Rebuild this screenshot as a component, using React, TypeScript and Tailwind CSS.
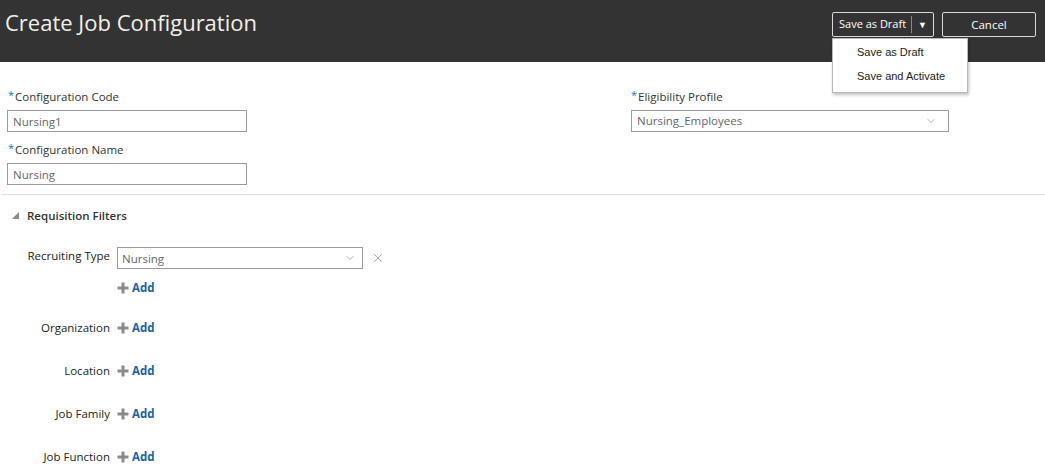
import { ChevronDown, X } from "lucide-react";

const font = { fontFamily: '"Open Sans", "Noto Sans", sans-serif' };

function Req({ children }: { children: string }) {
  return (
    <div className="flex h-[16px] items-end text-[11.5px] leading-[16px] text-[#333]">
      <span className="mr-[1px] self-start text-[11px] leading-[11px] text-[#1a73b8]">*</span>
      {children}
    </div>
  );
}

function AddLink() {
  return (
    <button className="flex items-center gap-[3px] text-[11.5px] font-bold text-[#1c639f]">
      <svg width="12" height="12" viewBox="0 0 12 12">
        <rect x="4.5" y="0.5" width="3" height="11" fill="#8a8a8a" />
        <rect x="0.5" y="4.5" width="11" height="3" fill="#8a8a8a" />
      </svg>
      Add
    </button>
  );
}

const filters = ["Organization", "Location", "Job Family", "Job Function"];

export default function App() {
  return (
    <div className="h-[475px] w-[1045px] overflow-hidden bg-white" style={font}>
      {/* header */}
      <div className="relative flex h-[62px] items-start justify-between bg-[#333333] pl-[5px] pr-[9px]">
        <h1 className="pt-[7px] text-[22px] font-normal leading-[30px] text-[#f0f0ea]">
          Create Job Configuration
        </h1>
        <div className="flex gap-[8px] pt-[12px]">
          <div className="relative">
            <div className="flex h-[25px] w-[102px] items-center whitespace-nowrap rounded-[2px] border border-[#d8d8d8] text-[11px] text-white">
              <span className="flex-1 pl-[6px]">Save as Draft</span>
              <span className="h-[17px] w-px bg-[#888]" />
              <span className="flex w-[21px] justify-center text-[9px]">▼</span>
            </div>
            <div
              className="absolute left-0 top-[26px] z-10 w-[136px] border border-[#b8b8b8] bg-white pb-[4px] pt-[1px] shadow-[1px_2px_3px_rgba(0,0,0,0.25)]"
              style={{ fontFamily: '"Liberation Sans", Arial, sans-serif' }}
            >
              <div className="pl-[24px] text-[11px] leading-[24px] text-[#222]">Save as Draft</div>
              <div className="pl-[24px] text-[11px] leading-[24px] text-[#222]">Save and Activate</div>
            </div>
          </div>
          <button className="h-[25px] w-[94px] rounded-[2px] border border-[#d8d8d8] text-[11.5px] text-white">
            Cancel
          </button>
        </div>
      </div>

      {/* main form */}
      <div className="flex pt-[27px]">
        <div className="w-[631px] pl-[7px]">
          <div className="pl-[1px]">
            <Req>Configuration Code</Req>
          </div>
          <input
            readOnly
            value="Nursing1"
            className="mt-[5px] h-[22px] w-[240px] border border-[#9a9a9a] px-[5px] text-[11.5px] text-[#666] outline-none"
          />
          <div className="mt-[10px] pl-[1px]">
            <Req>Configuration Name</Req>
          </div>
          <input
            readOnly
            value="Nursing"
            className="mt-[5px] h-[22px] w-[240px] border border-[#9a9a9a] px-[5px] text-[11.5px] text-[#666] outline-none"
          />
        </div>
        <div>
          <Req>Eligibility Profile</Req>
          <div className="mt-[5px] flex h-[22px] w-[318px] items-center justify-between border border-[#9a9a9a] pl-[5px] pr-[11px] text-[11.5px] text-[#666]">
            Nursing_Employees
            <ChevronDown size={12} strokeWidth={1.5} className="text-[#999]" />
          </div>
        </div>
      </div>

      <div className="ml-[2px] mt-[9px] h-px bg-[#dcdcdc]" />

      {/* requisition filters */}
      <div className="flex items-center pl-[11px] pt-[12px]">
        <svg width="9" height="9" viewBox="0 0 9 9" className="mr-[7px]">
          <polygon points="8,1 8,8 1,8" fill="#8a8a8a" />
        </svg>
        <span className="text-[11.5px] font-semibold text-[#333]">Requisition Filters</span>
      </div>

      <div className="mt-[23px] flex flex-col text-[11.5px] text-[#222]">
        <div className="flex">
          <div className="w-[110px] text-right">Recruiting Type</div>
          <div className="ml-[7px]">
            <div className="flex items-center">
              <div className="flex h-[22px] w-[246px] items-center justify-between border border-[#9a9a9a] pl-[4px] pr-[6px] text-[#666]">
                Nursing
                <ChevronDown size={12} strokeWidth={1.5} className="text-[#999]" />
              </div>
              <X size={14} strokeWidth={1.3} className="ml-[8px] text-[#888]" />
            </div>
            <div className="mt-[10px]">
              <AddLink />
            </div>
          </div>
        </div>
        {filters.map((f, i) => (
          <div key={f} className={`${i === 0 ? "mt-[21px]" : "mt-[22px]"} flex h-[21px] items-center`}>
            <div className="w-[110px] text-right">{f}</div>
            <div className="ml-[7px]">
              <AddLink />
            </div>
          </div>
        ))}
      </div>
    </div>
  );
}
